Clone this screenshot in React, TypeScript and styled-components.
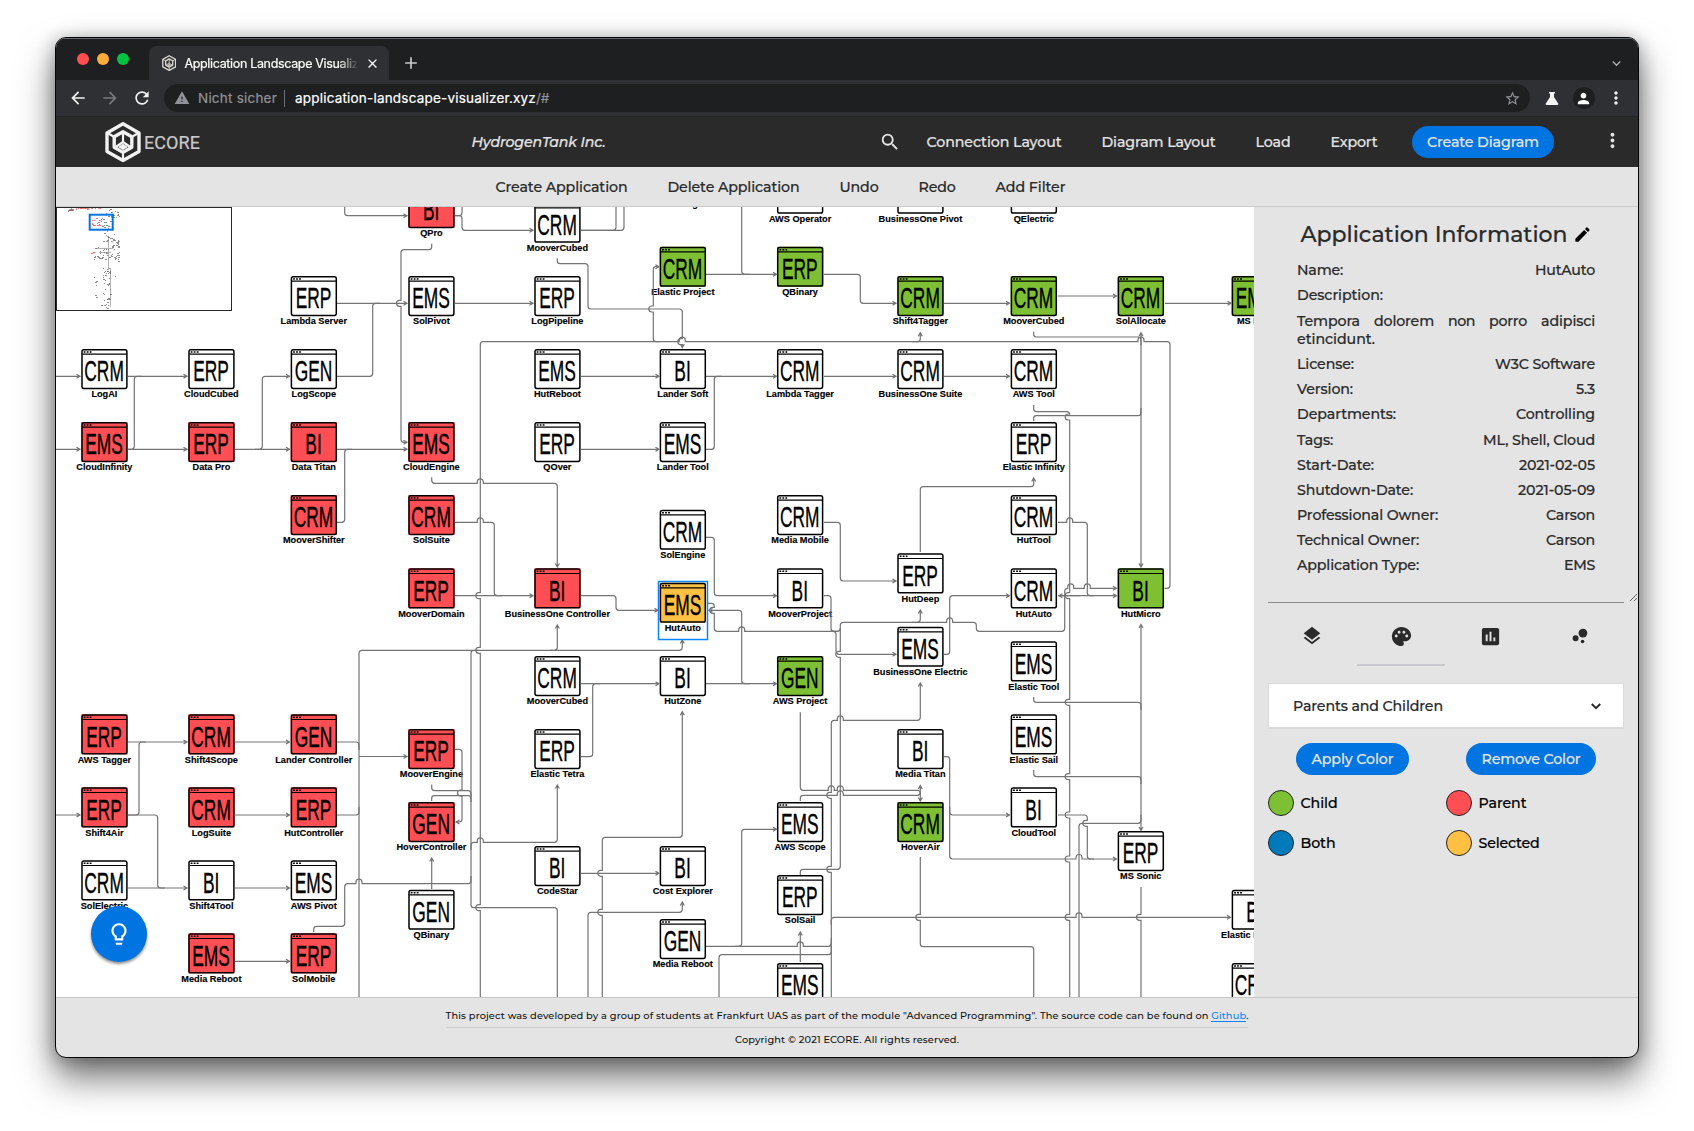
import React, { useLayoutEffect, useRef, useState } from "react";
import styled, { createGlobalStyle } from "styled-components";
import {
  MdSearch, MdMoreVert, MdArrowBack, MdArrowForward, MdRefresh, MdWarning, MdStarBorder, MdPerson,
  MdEdit, MdLayers, MdPalette, MdAssessment, MdBubbleChart, MdLightbulbOutline, MdClose, MdAdd,
  MdKeyboardArrowDown,
} from "react-icons/md";

const ui = `Montserrat, Inter, "Open Sans", sans-serif`;
const chromeFont = `Inter, Roboto, sans-serif`;
const blue = "#0074e0";
const red = "#ff4f54";
const green = "#7dc033";
const amber = "#ffc044";

const Global = createGlobalStyle`
  * { box-sizing: border-box; }
  body { margin: 0; background: #fff; overflow: hidden; }
`;

const FitSpan = styled.span`
  display: inline-block;
  white-space: nowrap;
`;

/** Text tracked so that its run fills a given width. */
function Fit({ w, children }: { w: number; children: string }) {
  const ref = useRef<HTMLSpanElement>(null);
  const [gap, setGap] = useState(0);
  useLayoutEffect(() => {
    if (ref.current) setGap((w - ref.current.getBoundingClientRect().width) / children.length);
  }, []);
  return <FitSpan ref={ref} style={{ letterSpacing: gap }}>{children}</FitSpan>;
}

const Desktop = styled.div`
  width: 1694px;
  height: 1131px;
  padding: 37px 55px 0;
  background: #fff;
`;
const Window = styled.div`
  width: 1584px;
  height: 1021px;
  border: 1px solid #060606;
  border-radius: 11px;
  overflow: hidden;
  display: flex;
  flex-direction: column;
  background: #e4e4e4;
  font-family: ${ui};
  font-weight: 500;
  color: #2a2a2a;
  -webkit-text-stroke-width: 0.2px;
  box-shadow: 0 20px 36px rgba(0, 0, 0, 0.54), 0 2px 18px rgba(0, 0, 0, 0.3);
`;

/* browser chrome */
const TabStrip = styled.div`
  height: 42px;
  flex: none;
  background: #1e1f21;
  border-top: 1px solid #66676a;
  display: flex;
  align-items: flex-end;
  padding: 0 16px 0 21px;
  font-family: ${chromeFont};
`;
const Lights = styled.div`
  display: flex;
  gap: 8px;
  width: 72px;
  height: 41px;
  padding-bottom: 2px;
  align-items: center;
`;
const Light = styled.i<{ $c: string }>`
  width: 12px;
  height: 12px;
  border-radius: 50%;
  background: ${(p) => p.$c};
`;
const Tab = styled.div`
  width: 240px;
  height: 34px;
  background: #2f3034;
  border-radius: 8px 8px 0 0;
  display: flex;
  align-items: center;
  padding: 0 5px 0 13px;
  color: #fff;
`;
const TabTitle = styled.div`
  width: 176px;
  margin: 0 5px 0 8px;
  overflow: hidden;
  font-size: 12.5px;
  font-weight: 400;
  mask-image: linear-gradient(90deg, #000 88%, transparent 99%);
`;
const NewTab = styled.div`
  color: #c8c9cb;
  margin-left: 12px;
  height: 34px;
  display: flex;
  align-items: center;
  flex: 1;
`;
const TabMenu = styled.div`
  height: 34px;
  display: flex;
  align-items: center;
  color: #a9aaad;
  margin-right: -3px;
`;
const AddressRow = styled.div`
  height: 37px;
  flex: none;
  background: #2f3034;
  border-bottom: 1px solid #252628;
  display: flex;
  align-items: center;
  padding: 0 12px;
  color: #f1f1f1;
  font-family: ${chromeFont};
`;
const NavIcon = styled.div<{ $dim?: boolean }>`
  width: 32px;
  display: flex;
  color: ${(p) => (p.$dim ? "#77787b" : "#f1f1f1")};
`;
const Omnibox = styled.div`
  width: 1366px;
  height: 28px;
  border-radius: 14px;
  background: #1e1f21;
  display: flex;
  align-items: center;
  padding: 0 9px 0 10px;
  font-size: 13.5px;
  font-weight: 400;
  color: #8f9398;
`;
const Insecure = styled.div`
  width: 111px;
  display: flex;
  align-items: center;
  gap: 8px;
  border-right: 1px solid #6c6e72;
  margin-right: 10px;
  height: 17px;
`;
const Url = styled.div`
  flex: 1;
  display: flex;
  b { font-weight: 400; color: #fff; }
`;
const ChromeActions = styled.div`
  display: flex;
  flex: 1;
  align-items: center;
  justify-content: space-between;
  padding-left: 15px;
`;
const Avatar = styled.div`
  width: 22px;
  height: 22px;
  border-radius: 50%;
  background: #1e1f21;
  display: flex;
  align-items: center;
  justify-content: center;
  margin-left: 2px;
`;

/* application header */
const Header = styled.header`
  height: 50px;
  flex: none;
  background: #2a2a2a;
  color: #e4e4e4;
  display: flex;
  align-items: center;
  padding: 0 14px 0 49px;
  font-size: 14.2px;
`;
const Brand = styled.div`
  display: flex;
  align-items: center;
  gap: 3px;
  width: 366.5px;
  font: 400 18px Roboto, sans-serif;
  color: #c9c9c9;
`;
const Company = styled.div`
  font-style: italic;
  width: 407px;
`;
const HeaderItem = styled.div<{ $w: number }>`
  width: ${(p) => p.$w}px;
  display: flex;
`;
const Pill = styled.button<{ $w: number }>`
  width: ${(p) => p.$w}px;
  height: 32px;
  border: 0;
  border-radius: 16px;
  background: ${blue};
  color: #e4e4e4;
  font: 500 14.2px ${ui};
  -webkit-text-stroke-width: 0.2px;
  padding: 0;
`;
const HeaderMore = styled.div`
  margin: -4px 0 0 auto;
  display: flex;
`;
const ActionBar = styled.nav`
  height: 40px;
  flex: none;
  border-bottom: 1px solid #cbcbcb;
  display: flex;
  justify-content: center;
  align-items: center;
  gap: 40px;
  font-size: 14.2px;
  padding-right: 133px;
`;

/* body */
const Body = styled.div`
  height: 790px;
  flex: none;
  display: flex;
`;
const Canvas = styled.div`
  width: 1198px;
  position: relative;
  background: #fff;
  overflow: hidden;
`;
const Minimap = styled.div`
  position: absolute;
  left: 0;
  top: 0;
  width: 176px;
  height: 104px;
  background: #fff;
  border: 1px solid #2a2a2a;
`;
const Hint = styled.button`
  position: absolute;
  left: 35px;
  top: 699px;
  width: 56px;
  height: 56px;
  border: 0;
  border-radius: 50%;
  background: ${blue};
  color: #fff;
  display: flex;
  align-items: center;
  justify-content: center;
  box-shadow: 0 2px 3px rgba(0, 0, 0, 0.45);
`;
const Side = styled.aside`
  width: 384px;
  display: flex;
  flex-direction: column;
  padding: 0 14px;
  font-size: 14.2px;
`;
const Info = styled.section`
  height: 396px;
  flex: none;
  border-bottom: 1px solid #8c8c8c;
  padding: 8px 29px 0 29px;
  position: relative;
`;
const Title = styled.h1`
  margin: 0 0 4.5px;
  height: 38px;
  display: flex;
  align-items: center;
  justify-content: center;
  gap: 5px;
  font-size: 22px;
  font-weight: 500;
  svg { color: #000; }
`;
const Row = styled.div`
  height: 25.2px;
  display: flex;
  justify-content: space-between;
  align-items: center;
`;
const Description = styled.div`
  height: 43.5px;
  padding-top: 4.5px;
  line-height: 18px;
  div { display: flex; justify-content: space-between; }
`;
const Grip = styled.div`
  position: absolute;
  right: -14px;
  bottom: 0;
  display: flex;
`;
const Tabs = styled.div`
  height: 63px;
  flex: none;
  display: grid;
  grid-template-columns: repeat(4, 88px);
  justify-content: space-between;
`;
const TabButton = styled.div<{ $on?: boolean }>`
  display: flex;
  justify-content: center;
  padding-top: 22px;
  border-bottom: 2px solid ${(p) => (p.$on ? "#c9c9ce" : "transparent")};
`;
const Select = styled.div`
  height: 46px;
  flex: none;
  margin-top: 17px;
  background: #fff;
  border: 1px solid #dadada;
  border-bottom-width: 2px;
  display: flex;
  align-items: center;
  justify-content: space-between;
  padding: 0 20px 0 24px;
`;
const Buttons = styled.div`
  display: flex;
  justify-content: space-between;
  padding: 0 28px;
  margin-top: 14px;
`;
const Legend = styled.div`
  display: grid;
  grid-template-columns: 178px 1fr;
  grid-auto-rows: 24px;
  row-gap: 16px;
  margin: 16px 0 0 -0.5px;
  color: #000;
`;
const LegendItem = styled.div<{ $c: string }>`
  display: flex;
  align-items: center;
  gap: 7px;
  &::before {
    content: "";
    width: 24px;
    height: 24px;
    border-radius: 50%;
    border: 1px solid #222;
    background: ${(p) => p.$c};
  }
`;
const Footer = styled.footer`
  flex: 1;
  border-top: 1px solid #c6c6c6;
  display: flex;
  flex-direction: column;
  align-items: center;
  font-size: 9.8px;
  color: #111;
  -webkit-text-stroke-width: 0;
  a {
    color: #0a84ff;
    text-decoration: none;
  }
  a span { box-shadow: 0 -1px 0 #0a84ff inset; }
`;
const Credit = styled.div`
  height: 30px;
  padding-top: 11px;
  border-bottom: 1px solid #cdcdcd;
  line-height: 13px;
`;
const Copyright = styled.div`
  padding-top: 5px;
  line-height: 13px;
`;

/* diagram */
const FrameText = styled.text`
  font: 400 29.7px "Liberation Sans", Arial, sans-serif;
  text-anchor: middle;
  stroke: #000;
  stroke-width: 0.35px;
`;
const NodeLabel = styled.text`
  font: 700 9.2px "Liberation Sans", Arial, sans-serif;
  text-anchor: middle;
  stroke: #000;
  stroke-width: 0.15px;
`;
const Diagram = styled.svg`
  display: block;
`;

type N = [number, number, string, string, string?];
const C = [81.3, 188.3, 290.7, 408.3, 534.3, 659.7, 777, 897.3, 1010.7, 1117.7, 1231.7];
const nodes: N[] = [
  [3, 188, "BI", "QPro", red],
  [4, 202.7, "CRM", "MooverCubed"],
  [5, 158.5, "", "CloudEngine"],
  [6, 173.7, "", "AWS Operator"],
  [7, 173.7, "", "BusinessOne Pivot"],
  [8, 173.7, "", "QElectric"],
  [5, 246.7, "CRM", "Elastic Project", green],
  [6, 246.7, "ERP", "QBinary", green],
  [2, 276, "ERP", "Lambda Server"],
  [3, 276, "EMS", "SolPivot"],
  [4, 276, "ERP", "LogPipeline"],
  [7, 276, "CRM", "Shift4Tagger", green],
  [8, 276, "CRM", "MooverCubed", green],
  [9, 276, "CRM", "SolAllocate", green],
  [10, 276, "EMS", "MS Pipe", green],
  [0, 349, "CRM", "LogAI"],
  [1, 349, "ERP", "CloudCubed"],
  [2, 349, "GEN", "LogScope"],
  [4, 349, "EMS", "HutReboot"],
  [5, 349, "BI", "Lander Soft"],
  [6, 349, "CRM", "Lambda Tagger"],
  [7, 349, "CRM", "BusinessOne Suite"],
  [8, 349, "CRM", "AWS Tool"],
  [0, 422, "EMS", "CloudInfinity", red],
  [1, 422, "ERP", "Data Pro", red],
  [2, 422, "BI", "Data Titan", red],
  [3, 422, "EMS", "CloudEngine", red],
  [4, 422, "ERP", "QOver"],
  [5, 422, "EMS", "Lander Tool"],
  [8, 422, "ERP", "Elastic Infinity"],
  [2, 495, "CRM", "MooverShifter", red],
  [3, 495, "CRM", "SolSuite", red],
  [5, 509.7, "CRM", "SolEngine"],
  [6, 495, "CRM", "Media Mobile"],
  [8, 495, "CRM", "HutTool"],
  [7, 553.3, "ERP", "HutDeep"],
  [3, 568.3, "ERP", "MooverDomain", red],
  [4, 568.3, "BI", "BusinessOne Controller", red],
  [5, 582.7, "EMS", "HutAuto", amber],
  [6, 568.3, "BI", "MooverProject"],
  [8, 568.3, "CRM", "HutAuto"],
  [9, 568.3, "BI", "HutMicro", green],
  [7, 626.7, "EMS", "BusinessOne Electric"],
  [8, 641.3, "EMS", "Elastic Tool"],
  [4, 656, "CRM", "MooverCubed"],
  [5, 656, "BI", "HutZone"],
  [6, 656, "GEN", "AWS Project", green],
  [0, 714.3, "ERP", "AWS Tagger", red],
  [1, 714.3, "CRM", "Shift4Scope", red],
  [2, 714.3, "GEN", "Lander Controller", red],
  [8, 714.3, "EMS", "Elastic Sail"],
  [3, 729, "ERP", "MooverEngine", red],
  [4, 729, "ERP", "Elastic Tetra"],
  [7, 729, "BI", "Media Titan"],
  [0, 787.3, "ERP", "Shift4Air", red],
  [1, 787.3, "CRM", "LogSuite", red],
  [2, 787.3, "ERP", "HutController", red],
  [8, 787.3, "BI", "CloudTool"],
  [3, 802, "GEN", "HoverController", red],
  [6, 802, "EMS", "AWS Scope"],
  [7, 802, "CRM", "HoverAir", green],
  [9, 831, "ERP", "MS Sonic"],
  [4, 846, "BI", "CodeStar"],
  [5, 846, "BI", "Cost Explorer"],
  [0, 860.3, "CRM", "SolElectric"],
  [1, 860.3, "BI", "Shift4Tool"],
  [2, 860.3, "EMS", "AWS Pivot"],
  [6, 875, "ERP", "SolSail"],
  [3, 889.7, "GEN", "QBinary"],
  [10, 889.7, "BI", "Elastic Pipeline"],
  [5, 919, "GEN", "Media Reboot"],
  [1, 933.3, "EMS", "Media Reboot", red],
  [2, 933.3, "ERP", "SolMobile", red],
  [6, 963, "EMS", ""],
  [10, 963, "CRM", ""],
];

/* [points, arrow at end, jumps]: a jump is a bump where one connection hops over another */
type E = [string, (0 | 1)?, string?];
const edges: E[] = [
  ["344.7,200 344.7,215.7 407,215.7", 1],
  ["455,215.7 462,215.7 462,200"],
  ["455,215.7 462,215.7 462,230.3 533,230.3", 1],
  ["431.7,243.7 431.7,249.7 401,249.7 401,442.3 407,442.3", 1, "401,303.3"],
  ["337,303.3 407,303.3", 1],
  ["337,376.3 372.7,376.3 372.7,303.3 380,303.3"],
  ["56,376.3 80,376.3", 1],
  ["128,376.3 187,376.3", 1],
  ["56,449.3 80,449.3", 1],
  ["128,449.3 187,449.3", 1],
  ["128,449.3 134.3,449.3 134.3,376.3 142,376.3"],
  ["235,449.3 289.5,449.3", 1],
  ["255,449.3 262.3,449.3 262.3,376.3 289.5,376.3", 1],
  ["337,449.3 407,449.3", 1],
  ["337,522.3 344.7,522.3 344.7,449.3 352,449.3"],
  ["455,303.3 533,303.3", 1],
  ["431.7,477.3 431.7,483.3 557.3,483.3 557.3,567", 1, "480.3,483.3"],
  ["455,522.3 494.3,522.3 494.3,595.7 502,595.7", 0, "480.3,522.3"],
  ["455,595.7 533,595.7", 1],
  ["1164.5,588.3 1170,588.3 1170,341.7 480.3,341.7 480.3,997", 0, "1141,341.7 682.3,341.7 480.3,595.7 480.3,650.3 480.3,907.7"],
  ["912,341.7 920.3,341.7 920.3,332.7", 1],
  ["660,341.7 653.3,341.7 653.3,266.7 659,266.7", 1, "653.3,309"],
  ["557.3,258.3 557.3,263.7 588,263.7 588,309 682.3,309 682.3,347.5", 1, "682.3,341.7"],
  ["581,230.3 624,230.3 624,200"],
  ["581,230.3 616,230.3 616,200"],
  ["706,274.3 776.5,274.3", 1],
  ["741.7,200 741.7,274.3 750,274.3"],
  ["824,274.3 860.3,274.3 860.3,303.3 896,303.3", 1],
  ["944,303.3 1009.5,303.3", 1],
  ["1058,296 1116.5,296", 1],
  ["1165,303.3 1231,303.3", 1],
  ["1033.7,331.7 1033.7,337 1141,337 1141,345"],
  ["1141,450 1141,332.7", 1],
  ["1141,450 1141,567", 1],
  ["581,376.3 659,376.3", 1],
  ["706,376.3 776.5,376.3", 1],
  ["824,376.3 896,376.3", 1],
  ["944,376.3 1009.5,376.3", 1],
  ["581,449.3 659,449.3", 1],
  ["706,449.3 714.3,449.3 714.3,376.3 722,376.3"],
  ["1033.7,405 1033.7,411.7 1069.7,411.7 1069.7,997", 0, "1069.7,417 1069.7,595.7 1069.7,702.3 1069.7,776.7 1069.7,815 1069.7,859 1069.7,917.3"],
  ["1033.7,421 1033.7,415.7 1141,415.7 1141,408"],
  ["920.3,552 920.3,486.7 1033.7,486.7 1033.7,478", 1],
  ["1058,522.3 1087.3,522.3 1087.3,595.7 1094,595.7", 0, "1069.7,522.3"],
  ["824,522.3 840.3,522.3 840.3,581 896,581", 1],
  ["706,537.3 714.3,537.3 714.3,595.7 776.5,595.7", 1],
  ["581,595.7 616,595.7 616,610.3 658,610.3", 1],
  ["550,650.3 557.3,650.3 557.3,625", 1],
  ["359,997 359,650.3 682.3,650.3 682.3,640", 1],
  ["478,650.3 471,650.3 471,907.7 557.3,907.7 557.3,997"],
  ["708,603.3 714.3,603.3 714.3,631.3 840.3,631.3 840.3,622.3 976.3,622.3 976.3,631.3 1064.7,631.3 1064.7,588.3 1116.5,588.3", 1, "714.3,610.3 741.7,631.3 949.7,622.3 1070.7,588.3 1087.3,588.3"],
  ["912,622.3 920.3,622.3 920.3,610", 1],
  ["1058,595.7 1116.5,595.7", 1],
  ["1080,595.7 1059,595.7", 1],
  ["750,683.7 741.7,683.7 741.7,610.3 709,610.3", 1],
  ["706,683.7 776.5,683.7", 1],
  ["824,595.7 831,595.7 831,631.3 838,631.3"],
  ["830,631.3 836,631.3 836,654.3 896,654.3", 1],
  ["840.3,628 840.3,869.3 800.3,869.3 800.3,875", 0, "840.3,654.3"],
  ["831.3,997 831.3,720.3 920.3,720.3 920.3,683", 1, "831.3,869.3 831.3,795.3 840.3,720.3"],
  ["944,654.3 949.7,654.3 949.7,595.7 1009.5,595.7", 1],
  ["800.3,712.3 800.3,790.3 920.3,790.3 920.3,801", 1, "831.3,790.3 840.3,790.3"],
  ["800.3,801 800.3,795.3 920.3,795.3 920.3,785.5", 1, "840.3,795.3"],
  ["944,756.7 949.7,756.7 949.7,859 1116.5,859", 1, "1079,859"],
  ["949.7,807 949.7,815 1009.5,815", 1],
  ["1058,815 1087.3,815 1087.3,859 1094,859", 0, "1087.3,823.3"],
  ["1079,997 1079,823.3 1141,823.3 1141,815"],
  ["1141,730 1141,624.5", 1],
  ["1141,730 1141,830.5", 1],
  ["1033.7,697 1033.7,702.3 1141,702.3 1141,710"],
  ["1033.7,770 1033.7,776.7 1141,776.7 1141,784"],
  ["1141,887 1141,997", 0, "1141,917.3"],
  ["920.3,857 920.3,946.7 1033.7,946.7 1033.7,997", 0, "920.3,917.3"],
  ["831.3,925 831.3,917.3 1230.5,917.3", 1, "1079,917.3"],
  ["581,683.7 659,683.7", 1],
  ["581,756.7 592.7,756.7 592.7,683.7 600,683.7"],
  ["602.3,997 602.3,837.3 682.3,837.3 682.3,711.7", 1, "602.3,912.3 602.3,873.3"],
  ["471,850 471,842.3 557.3,842.3 557.3,785", 1, "480.3,842.3"],
  ["581,873.3 659,873.3", 1],
  ["588,997 588,912.3 682.3,912.3 682.3,902", 1],
  ["706,946.3 831.3,946.3 831.3,938", 0, "800.3,946.3"],
  ["735,946.3 741.7,946.3 741.7,829.3 776.5,829.3", 1],
  ["719,997 719,954.7 831.3,954.7 831.3,946"],
  ["800.3,962 800.3,932", 1],
  ["337,742 359,742 359,750"],
  ["337,815 359,815 359,807"],
  ["359,756.5 407,756.5", 1],
  ["455,749.3 462,749.3 462,822 456,822", 1, "462,793"],
  ["431.7,784.5 431.7,790.7 471,790.7 471,797"],
  ["431.7,801 431.7,795.7 471,795.7 471,802"],
  ["431.7,889 431.7,858", 1],
  ["313.7,932 313.7,926.3 344.7,926.3 344.7,883.7 471,883.7 471,876", 0, "359,883.7"],
  ["128,742 187,742", 1],
  ["128,815 139,815 139,742 146,742"],
  ["235,742 289.5,742", 1],
  ["56,815 80,815", 1],
  ["128,815 157.7,815 157.7,888 165,888"],
  ["235,815 289.5,815", 1],
  ["128,888 187,888", 1],
  ["235,888 289.5,888", 1],
  ["235,961.3 289.5,961.3", 1],
];

const parse = (s?: string) => (s ? s.split(" ").map((p) => p.split(",").map(Number)) : []);

function edgePath([pts, arrow, jumps]: E): string {
  const p = parse(pts);
  const js = parse(jumps);
  let d = `M${p[0]}`;
  for (let i = 1; i < p.length; i++) {
    const [x0, y0] = p[i - 1];
    const [x1, y1] = p[i];
    const len = Math.hypot(x1 - x0, y1 - y0);
    const ux = (x1 - x0) / len;
    const uy = (y1 - y0) / len;
    // bumps rise above horizontal runs and stand left of vertical ones
    const sweep = ux > 0 || uy < 0 ? 1 : 0;
    const ox = uy ? -1.5 : 0;
    const oy = ux ? -1.5 : 0;
    js.map(([x, y]) => ({ off: Math.abs((x - x0) * uy - (y - y0) * ux), t: (x - x0) * ux + (y - y0) * uy }))
      .filter(({ off, t }) => off < 1.1 && t > 1 && t < len - 1)
      .sort((a, b) => a.t - b.t)
      .forEach(({ t }) => {
        d += ` L${x0 + ux * (t - 3)},${y0 + uy * (t - 3)} l${ox},${oy} a3,3 0 0 ${sweep} ${ux * 6},${uy * 6} l${-ox},${-oy}`;
      });
    if (i < p.length - 1) {
      const [x2, y2] = p[i + 1];
      const l2 = Math.hypot(x2 - x1, y2 - y1);
      const r = Math.min(3, len / 2, l2 / 2);
      d += ` L${x1 - ux * r},${y1 - uy * r} Q${x1},${y1} ${x1 + ((x2 - x1) / l2) * r},${y1 + ((y2 - y1) / l2) * r}`;
    } else {
      d += ` L${x1},${y1}`;
      if (arrow) {
        const bx = x1 - ux * 3.5;
        const by = y1 - uy * 3.5;
        d += ` M${bx - uy * 2},${by + ux * 2} L${x1},${y1} L${bx + uy * 2},${by - ux * 2}`;
      }
    }
  }
  return d;
}

function AppNode({ n: [c, y, kind, label, fill] }: { n: N }) {
  const x = C[c];
  return (
    <g>
      <rect x={x} y={y} width="46.3" height="40" fill={fill || "#fff"} />
      <rect x={x + 0.7} y={y + 0.7} width="44.9" height="38.7" rx="1.8" fill="none" stroke="#000" strokeWidth="1.5" />
      <path d={`M${x + 1} ${y + 5.2}H${x + 45.3}`} stroke="#000" strokeWidth="1.2" />
      <path d={`M${x + 2.4} ${y + 3}h8`} stroke="#000" strokeWidth="1.5" strokeDasharray="1.8 1.2" />
      {kind && <FrameText transform={`translate(${x + 22.8} ${y + 32.3}) scale(.585 1)`}>{kind}</FrameText>}
      {label && <NodeLabel x={x + 23.1} y={y + 48.2}>{label}</NodeLabel>}
    </g>
  );
}

const mapDots: [number, number, number, number, string][] = [];
let seed = 7;
const rnd = () => ((seed = (seed * 16807) % 2147483647) / 2147483647);
const scatter = (n: number, x: number, y: number, w: number, h: number, c: string) => {
  for (let i = 0; i < n; i++) {
    mapDots.push([Math.round(x + rnd() * w), Math.round(y + rnd() * h), rnd() > 0.6 ? 2 : 1, 1, c]);
  }
};
scatter(22, 12, 0, 32, 0.6, "#e66");
scatter(10, 11, 1, 4, 2, "#866");
scatter(16, 35, 10, 8, 8, "#e44");
scatter(14, 46, 0, 16, 8, "#666");
scatter(16, 44, 9, 12, 12, "#666");
scatter(6, 53, 8, 9, 1, "#4a3");
scatter(14, 45, 22, 12, 12, "#777");
scatter(30, 54, 32, 8, 22, "#666");
scatter(26, 37, 39, 18, 12, "#666");
scatter(3, 34, 44, 3, 1, "#e44");
scatter(12, 44, 60, 10, 6, "#666");
scatter(12, 45, 66, 8, 14, "#666");
scatter(20, 44, 80, 9, 20, "#666");
scatter(6, 37, 60, 3, 32, "#777");
scatter(2, 57, 68, 1, 1, "#6b3");

const Hexagon = ({ size, color }: { size: number; color: string }) => (
  <svg width={size * 0.9} height={size} viewBox="0 0 36 40" fill="none" stroke={color} strokeLinejoin="round">
    <path d="M18 1.8 34 11v18.500L18 38.500 2 29.500V11z" strokeWidth="3.400" />
    <path d="M18 9.800 26.800 14.800v10.400L18 30.400 9.200 25.200V14.800z" strokeWidth="3.400" />
    <path d="M18 9v11M18 20l-8 5.500M18 20l8 5.500M18 31v8M2.500 11l6 3.500M33.500 11l-6 3.500" strokeWidth="2.200" />
    <path d="M13.800 25 18 22.300 22.200 25 18 27.600z" fill={color} strokeWidth="1" />
  </svg>
);

const details: [string, number, string, number][] = [
  ["License:", 57, "W3C Software", 100],
  ["Version:", 56, "5.3", 19],
  ["Departments:", 99, "Controlling", 79],
  ["Tags:", 36, "ML, Shell, Cloud", 112],
  ["Start-Date:", 77, "2021-02-05", 76],
  ["Shutdown-Date:", 116, "2021-05-09", 77],
  ["Professional Owner:", 141, "Carson", 49],
  ["Technical Owner:", 122, "Carson", 49],
  ["Application Type:", 122, "EMS", 31],
];

export default function App() {
  return (
    <Desktop>
      <Global />
      <Window>
        <TabStrip>
          <Lights><Light $c="#ff4f4f" /><Light $c="#ffad38" /><Light $c="#05c242" /></Lights>
          <Tab>
            <Hexagon size={16} color="#d8d6cb" />
            <TabTitle><Fit w={185}>Application Landscape Visualizer</Fit></TabTitle>
            <MdClose size={15} />
          </Tab>
          <NewTab><MdAdd size={20} /></NewTab>
          <TabMenu><MdKeyboardArrowDown size={17} /></TabMenu>
        </TabStrip>
        <AddressRow>
          <NavIcon><MdArrowBack size={20} /></NavIcon>
          <NavIcon $dim><MdArrowForward size={20} /></NavIcon>
          <NavIcon><MdRefresh size={20} /></NavIcon>
          <Omnibox>
            <Insecure><MdWarning size={16} /><Fit w={79}>Nicht sicher</Fit></Insecure>
            <Url><b><Fit w={241}>application-landscape-visualizer.xyz</Fit></b><Fit w={13}>/#</Fit></Url>
            <MdStarBorder size={17} />
          </Omnibox>
          <ChromeActions>
            <svg width="14" height="15" viewBox="0 0 14 15" fill="#f4f4f4">
              <path d="M4 1h6v1.500H9V6l4.200 6.500c.4.700 0 1.500-.8 1.500H1.600c-.8 0-1.200-.8-.8-1.500L5 6V2.500H4z" />
            </svg>
            <Avatar><MdPerson size={17} color="#fff" /></Avatar>
            <MdMoreVert size={20} />
          </ChromeActions>
        </AddressRow>

        <Header>
          <Brand><Hexagon size={40} color="#f2f2f2" /><Fit w={56}>ECORE</Fit></Brand>
          <Company><Fit w={134}>HydrogenTank Inc.</Fit></Company>
          <HeaderItem $w={48}><MdSearch size={22} /></HeaderItem>
          <HeaderItem $w={175}><Fit w={135}>Connection Layout</Fit></HeaderItem>
          <HeaderItem $w={154}><Fit w={114}>Diagram Layout</Fit></HeaderItem>
          <HeaderItem $w={75}><Fit w={35}>Load</Fit></HeaderItem>
          <HeaderItem $w={81.5}><Fit w={47}>Export</Fit></HeaderItem>
          <Pill $w={142}><Fit w={112}>Create Diagram</Fit></Pill>
          <HeaderMore><MdMoreVert size={23} /></HeaderMore>
        </Header>
        <ActionBar>
          <Fit w={132}>Create Application</Fit>
          <Fit w={132}>Delete Application</Fit>
          <Fit w={39}>Undo</Fit>
          <Fit w={37}>Redo</Fit>
          <Fit w={70}>Add Filter</Fit>
        </ActionBar>

        <Body>
          <Canvas>
            <Diagram width="1198" height="790" viewBox="56 207 1198 790">
              {nodes.map((n, i) => <AppNode key={i} n={n} />)}
              <g fill="none" stroke="#747474" strokeWidth="1.2">
                {edges.map((e, i) => <path key={i} d={edgePath(e)} />)}
              </g>
              <rect x="658.500" y="581.500" width="49" height="58" fill="none" stroke="#0a84ff" strokeWidth="1.500" />
            </Diagram>
            <Minimap>
              <svg width="174" height="102" viewBox="0 0 174 102">
                <path d="M51.500 29V62M53.500 60V99M40 40.500h16M42 44.500h12" stroke="#aaa" strokeWidth=".9" fill="none" />
                {mapDots.map(([x, y, w, h, c], i) => <rect key={i} x={x} y={y} width={w} height={h} fill={c} opacity=".75" />)}
                <rect x="32.700" y="6.700" width="23" height="15" fill="none" stroke={blue} strokeWidth="2" />
              </svg>
            </Minimap>
            <Hint><MdLightbulbOutline size={26} /></Hint>
          </Canvas>

          <Side>
            <Info>
              <Title><Fit w={267}>Application Information</Fit><MdEdit size={19} /></Title>
              <Row><Fit w={46}>Name:</Fit><Fit w={60}>HutAuto</Fit></Row>
              <Row><Fit w={86}>Description:</Fit></Row>
              <Description>
                <div>
                  <Fit w={63}>Tempora</Fit><Fit w={60}>dolorem</Fit><Fit w={27}>non</Fit>
                  <Fit w={38}>porro</Fit><Fit w={54}>adipisci</Fit>
                </div>
                <Fit w={78}>etincidunt.</Fit>
              </Description>
              {details.map(([k, kw, v, vw]) => (
                <Row key={k}><Fit w={kw}>{k}</Fit><Fit w={vw}>{v}</Fit></Row>
              ))}
              <Grip>
                <svg width="9" height="9" viewBox="0 0 9 9" stroke="#555" strokeWidth=".9"><path d="M1 8 8 1M5 8l3-3" /></svg>
              </Grip>
            </Info>
            <Tabs>
              <TabButton><MdLayers size={22} /></TabButton>
              <TabButton $on><MdPalette size={23} /></TabButton>
              <TabButton><MdAssessment size={23} /></TabButton>
              <TabButton><MdBubbleChart size={22} /></TabButton>
            </Tabs>
            <Select>
              <Fit w={150}>Parents and Children</Fit>
              <svg width="14" height="14" viewBox="0 0 14 14" fill="none" stroke="#2a2a2a" strokeWidth="2"><path d="m2.800 5 4.200 4.200L11.200 5" /></svg>
            </Select>
            <Buttons>
              <Pill $w={113}><Fit w={82}>Apply Color</Fit></Pill>
              <Pill $w={130}><Fit w={99}>Remove Color</Fit></Pill>
            </Buttons>
            <Legend>
              <LegendItem $c={green}><Fit w={37}>Child</Fit></LegendItem>
              <LegendItem $c={red}><Fit w={48}>Parent</Fit></LegendItem>
              <LegendItem $c="#007aba"><Fit w={35}>Both</Fit></LegendItem>
              <LegendItem $c={amber}><Fit w={61}>Selected</Fit></LegendItem>
            </Legend>
          </Side>
        </Body>

        <Footer>
          <Credit>
            <Fit w={763}>{'This project was developed by a group of students at Frankfurt UAS as part of the module "Advanced Programming". The source code can be found on'}</Fit>
            {" "}<a href="#"><Fit w={35}>Github</Fit></a>.
          </Credit>
          <Copyright><Fit w={224}>Copyright © 2021 ECORE. All rights reserved.</Fit></Copyright>
        </Footer>
      </Window>
    </Desktop>
  );
}
